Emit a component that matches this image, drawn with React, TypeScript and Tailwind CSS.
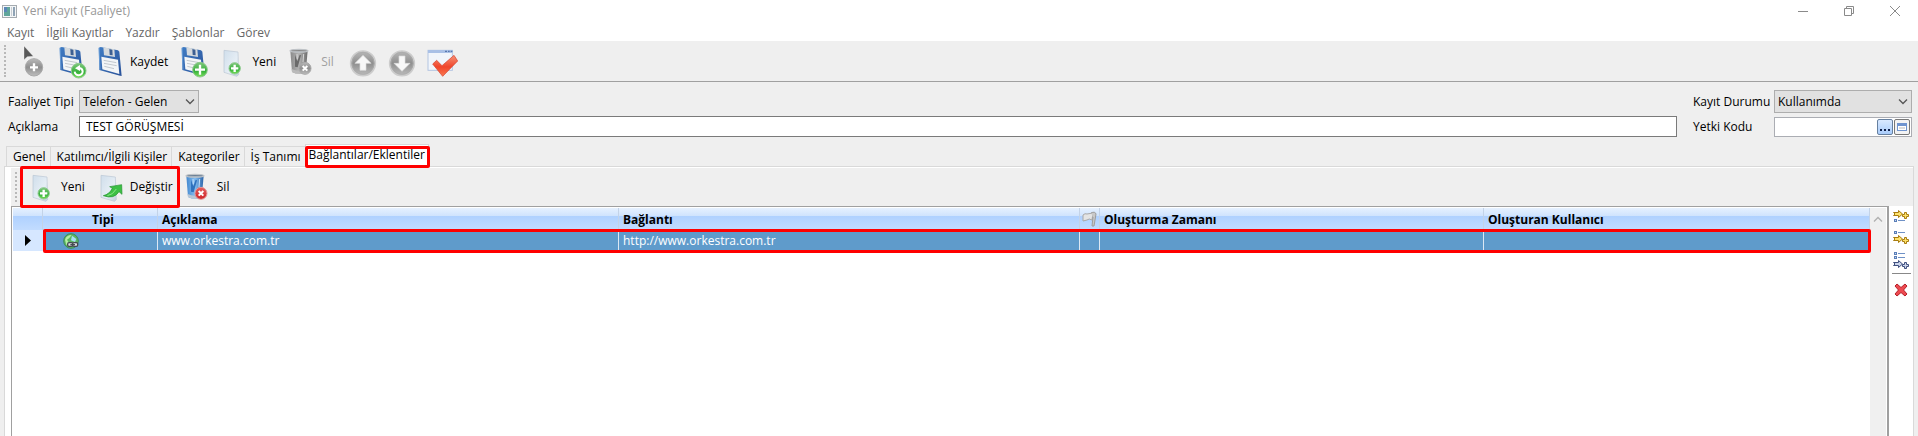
import React from 'react'

type IconProps = {
  className?: string
}

type ToolItem = {
  id: string
  icon: React.ReactNode
  text?: string
  label?: string
  disabled?: boolean
}

function Badge({ cx, cy, r, tone, children }: { cx: number; cy: number; r: number; tone: 'green' | 'gray' | 'red'; children?: React.ReactNode }) {
  const fill = { green: 'url(#badgeGreen)', gray: 'url(#badgeGray)', red: 'url(#badgeRed)' }[tone]
  const stroke = { green: '#8cc98b', gray: '#a9a9a9', red: '#e39a9a' }[tone]
  return (
    <g>
      <circle cx={cx} cy={cy} r={r} fill={fill} stroke={stroke} strokeWidth="3" />
      <g transform={`translate(${cx} ${cy})`}>{children}</g>
    </g>
  )
}

function Plus({ s }: { s: number }) {
  return <path d={`M${-s} 0H${s}M0 ${-s}V${s}`} stroke="#fff" strokeWidth="7" />
}

function Cross({ s }: { s: number }) {
  return <path d={`M${-s} ${-s}L${s} ${s}M${s} ${-s}L${-s} ${s}`} stroke="#fff" strokeWidth="6" />
}

function ToolSvg({ children }: { children: React.ReactNode }) {
  return (
    <svg viewBox="0 0 96 96" className="size-8 shrink-0 overflow-visible" fill="none" aria-hidden="true">
      {children}
    </svg>
  )
}

function SharedGradients() {
  return (
    <svg className="absolute size-0" aria-hidden="true">
      <defs>
        <linearGradient id="badgeGreen" x1="0" y1="0" x2="0" y2="1">
          <stop offset="0" stopColor="#7fc77c" />
          <stop offset="0.6" stopColor="#35b13a" />
          <stop offset="1" stopColor="#7be05c" />
        </linearGradient>
        <linearGradient id="badgeGray" x1="0" y1="0" x2="0" y2="1">
          <stop offset="0" stopColor="#b9b9b9" />
          <stop offset="0.5" stopColor="#8f8f8f" />
          <stop offset="1" stopColor="#bdbdbd" />
        </linearGradient>
        <linearGradient id="badgeRed" x1="0" y1="0" x2="0" y2="1">
          <stop offset="0" stopColor="#e2605f" />
          <stop offset="1" stopColor="#cf2226" />
        </linearGradient>
        <linearGradient id="floppyBody" x1="0" y1="0" x2="1" y2="1">
          <stop offset="0" stopColor="#3f7cc4" />
          <stop offset="1" stopColor="#2a5299" />
        </linearGradient>
        <linearGradient id="paper" x1="0" y1="0" x2="1" y2="1">
          <stop offset="0" stopColor="#d0deeb" />
          <stop offset="0.6" stopColor="#e6eef5" />
          <stop offset="1" stopColor="#c0cedb" />
        </linearGradient>
        <linearGradient id="binGray" x1="0" y1="0" x2="1" y2="0">
          <stop offset="0" stopColor="#8a8a8a" />
          <stop offset="0.5" stopColor="#b4b4b4" />
          <stop offset="1" stopColor="#6c6c6c" />
        </linearGradient>
        <linearGradient id="binBlue" x1="0" y1="0" x2="1" y2="0">
          <stop offset="0" stopColor="#4287cf" />
          <stop offset="0.5" stopColor="#84bdf0" />
          <stop offset="1" stopColor="#2a64aa" />
        </linearGradient>
        <linearGradient id="tick" x1="0" y1="0" x2="0" y2="1">
          <stop offset="0" stopColor="#f79276" />
          <stop offset="0.55" stopColor="#f0452b" />
          <stop offset="1" stopColor="#fa7a50" />
        </linearGradient>
      </defs>
    </svg>
  )
}

function Floppy() {
  return (
    <g>
      <path d="M8 5L14 3L66 13L70 17L77 90L72 89L10 72Z" fill="url(#floppyBody)" />
      <path d="M22 4L55 10L57 33L24 28Z" fill="#d5dade" />
      <path d="M40 9L49 11L50 28L41 27Z" fill="#3c5f92" />
      <path d="M16 32L66 41L70 84L19 70Z" fill="#f3f5f7" />
      <path d="M23 43L61 50M24 52L62 59M25 61L54 68" stroke="#c2c8ce" strokeWidth="3" />
      <path d="M9 6L12 71" stroke="#7fb0e4" strokeWidth="2" />
    </g>
  )
}

function CursorAddIcon() {
  return (
    <ToolSvg>
      <Badge cx={48} cy={64} r={26} tone="gray">
        <Plus s={12} />
      </Badge>
      <path d="M18 0V41L28 32L46 31Z" fill="#595959" stroke="#fff" strokeWidth="1" />
    </ToolSvg>
  )
}

function SaveRefreshIcon() {
  return (
    <ToolSvg>
      <Floppy />
      <Badge cx={65} cy={74} r={22} tone="green">
        <path d="M-12 3A12 11 0 0 0 12 2Q11 -7 2 -8" stroke="#fff" strokeWidth="6" />
        <path d="M4 -17V1L-11 -7Z" fill="#fff" />
      </Badge>
    </ToolSvg>
  )
}

function SaveIcon() {
  return (
    <ToolSvg>
      <Floppy />
    </ToolSvg>
  )
}

function SaveAddIcon() {
  return (
    <ToolSvg>
      <Floppy />
      <Badge cx={63} cy={71} r={22} tone="green">
        <Plus s={15} />
      </Badge>
    </ToolSvg>
  )
}

function NewIcon() {
  return (
    <ToolSvg>
      <path d="M18 13L60 18L62 86L56 91L18 79Z" fill="url(#paper)" stroke="#b9c6d3" strokeWidth="2" />
      <Badge cx={50} cy={67} r={17} tone="green">
        <Plus s={11} />
      </Badge>
    </ToolSvg>
  )
}

function ReplaceIcon() {
  return (
    <ToolSvg>
      <path d="M15 13L58 18L61 86L55 91L15 79Z" fill="url(#paper)" stroke="#b9c6d3" strokeWidth="2" />
      <path d="M22 74Q40 70 49 52L41 47L77 41L78 70L69 62Q54 86 22 74Z" fill="#3cc044" stroke="#249131" strokeWidth="2" />
      <path d="M34 74Q50 72 61 54" stroke="#8fe58b" strokeWidth="3" />
    </ToolSvg>
  )
}

function BinIcon({ gray = false }: { gray?: boolean }) {
  return (
    <ToolSvg>
      <path d="M10 14L15 78Q34 88 56 80L62 14Z" fill={gray ? 'url(#binGray)' : 'url(#binBlue)'} />
      <path d="M24 26L24 62L32 64L42 28L38 26L31 46Z" fill={gray ? '#6a6a6a' : '#2f72bd'} />
      <path d="M30 24L31 40M50 24L48 48" stroke={gray ? '#d8d8d8' : '#c4e0fa'} strokeWidth="3" />
      <path d="M14 69Q34 79 57 70L56 80Q34 88 15 78Z" fill={gray ? '#bababa' : '#b9c6d4'} />
      <ellipse cx="36" cy="14" rx="27" ry="4" fill={gray ? '#8a8a8a' : '#6b7f95'} stroke="#bfc3c7" strokeWidth="4" />
      <Badge cx={54} cy={67} r={18} tone={gray ? 'gray' : 'red'}>
        <Cross s={7} />
      </Badge>
    </ToolSvg>
  )
}

function ArrowIcon({ down = false }: { down?: boolean }) {
  return (
    <ToolSvg>
      <circle cx="54" cy="52" r="37" fill="url(#badgeGray)" stroke="#cccccc" strokeWidth="5" />
      <circle cx="54" cy="52" r="33" stroke="#aaaaaa" strokeWidth="2" />
      <path
        d={down ? 'M54 76L30 52H45V30H63V52H78Z' : 'M54 28L30 52H45V73H63V52H78Z'}
        fill="#f8f8f8"
        stroke="#dcdcdc"
        strokeWidth="2"
      />
    </ToolSvg>
  )
}

function CheckWindowIcon() {
  return (
    <ToolSvg>
      <rect x="15" y="13" width="73" height="60" fill="#f1f5fb" stroke="#b4c5e2" strokeWidth="3" />
      <rect x="15" y="12" width="74" height="9" fill="#a9c0e6" />
      <path d="M66 16H72M75 16H80M83 16H88" stroke="#5877ae" strokeWidth="4" />
      <path d="M29 54L41 43L57 59L93 28L104 45L59 91Z" fill="url(#tick)" stroke="#d33c28" strokeWidth="2" strokeLinejoin="round" />
    </ToolSvg>
  )
}

function FlagIcon() {
  return (
    <svg viewBox="0 0 15 16" className="mx-auto h-4 w-[15px]" fill="none" aria-hidden="true">
      <path d="M1 4Q3 2 5 3L11 2L10 9Q7 7 5 9L1 10Z" fill="#e4e4e4" stroke="#a8a8a8" />
      <path d="M9 2Q13 0 14 3L12 15H10L11 6" fill="#c9c9c9" stroke="#9c9c9c" />
    </svg>
  )
}

function GlobeLinkIcon() {
  return (
    <svg viewBox="0 0 48 48" className="block size-4" fill="none" aria-hidden="true">
      <circle cx="24" cy="24" r="22" fill="#5cb562" stroke="#3c8d5a" strokeWidth="3" />
      <path d="M6 20Q10 6 26 6Q20 16 12 20L18 30L10 36Z" fill="#b5efa4" />
      <path d="M27 8L40 18L36 27L24 22Z" fill="#a6dff4" />
      <g stroke="#464a50" strokeWidth="4">
        <rect x="14" y="29" width="15" height="11" rx="4" fill="#d9dde0" />
        <rect x="29" y="29" width="15" height="11" rx="4" fill="#d9dde0" />
        <path d="M22 35H36" />
      </g>
    </svg>
  )
}

function InsertRowIcon({ kind }: { kind: 'before' | 'after' | 'end' }) {
  const blue = kind === 'end'
  const arrowY = { before: 0, after: 4, end: 8 }[kind]
  const lines = { before: [10], after: [1], end: [1, 5] }[kind]
  return (
    <svg viewBox="0 0 16 18" className="block h-[18px] w-4" fill="none" aria-hidden="true">
      {lines.map((y) => (
        <g key={y}>
          <rect x="1.5" y={y - 0.5} width="2" height="2" fill="#c7d8f3" stroke="#5b7fb8" />
          <path d={`M5 ${y + 0.5}H12`} stroke="#6f91c6" />
        </g>
      ))}
      <g transform={`translate(0 ${arrowY})`} fill={blue ? '#cbd5ec' : '#ffe36b'} stroke={blue ? '#3f4f7e' : '#a87c10'}>
        <path d="M0.5 2.5H5.5V0.5L9.5 4L5.5 7.5V5.5H0.5L2 4Z" />
        <path d="M11.5 2.5H13.5V4.5H15.5V6.5H13.5V8.5H11.5V6.5H9.5V4.5H11.5Z" />
      </g>
    </svg>
  )
}

function DeleteRowIcon() {
  return (
    <svg viewBox="0 0 14 14" className="block size-3.5" aria-hidden="true">
      <path d="M1 3L3 1L7 4.5L11 1L13 3L9.5 7L13 11L11 13L7 9.5L3 13L1 11L4.5 7Z" fill="#ee4a50" stroke="#b5202a" />
    </svg>
  )
}

function Chevron({ className = '' }: IconProps) {
  return (
    <svg viewBox="0 0 10 6" className={`h-1.5 w-2.5 ${className}`} fill="none" aria-hidden="true">
      <path d="M1 0.5L5 4.5L9 0.5" stroke="currentColor" strokeWidth="1.3" />
    </svg>
  )
}

function Grip() {
  return <span className="my-1 w-0.5 self-stretch border-l-2 border-dotted border-[#b8b8b8]" />
}

function Marker({ className }: IconProps) {
  return <span className={`pointer-events-none absolute rounded-xs border-3 border-[#ff0000] ${className}`} />
}

function ToolButton({ item }: { item: ToolItem }) {
  return (
    <button type="button" disabled={item.disabled} aria-label={item.label} className="flex items-center disabled:text-[#a0a0a0]">
      {item.icon}
      {item.text ? <span className="pl-0.5 pr-1">{item.text}</span> : null}
    </button>
  )
}

function Dropdown({ id, value, className }: { id: string; value: string; className: string }) {
  return (
    <div className={`relative h-[23px] ${className}`}>
      <select id={id} className="block size-full appearance-none border border-[#adadad] bg-[#e1e1e1] pl-[3px] pr-5">
        <option>{value}</option>
      </select>
      <Chevron className="pointer-events-none absolute right-1 top-[9px] text-[#555]" />
    </div>
  )
}

const menu = ['Kayıt', 'İlgili Kayıtlar', 'Yazdır', 'Şablonlar', 'Görev']

const mainTools: ToolItem[] = [
  { id: 'pick', icon: <CursorAddIcon />, label: 'Seç' },
  { id: 'save-refresh', icon: <SaveRefreshIcon />, label: 'Kaydet ve yenile' },
  { id: 'save', icon: <SaveIcon />, text: 'Kaydet' },
  { id: 'save-new', icon: <SaveAddIcon />, label: 'Kaydet ve yeni' },
  { id: 'new', icon: <NewIcon />, text: 'Yeni' },
  { id: 'delete', icon: <BinIcon gray />, text: 'Sil', disabled: true },
  { id: 'up', icon: <ArrowIcon />, label: 'Önceki', disabled: true },
  { id: 'down', icon: <ArrowIcon down />, label: 'Sonraki', disabled: true },
  { id: 'done', icon: <CheckWindowIcon />, label: 'Tamamla' },
]

const linkTools: ToolItem[] = [
  { id: 'new', icon: <NewIcon />, text: 'Yeni' },
  { id: 'replace', icon: <ReplaceIcon />, text: 'Değiştir' },
]

const tabs = ['Genel', 'Katılımcı/İlgili Kişiler', 'Kategoriler', 'İş Tanımı']

function TitleBar() {
  return (
    <header className="flex h-[22px] items-center bg-white pl-0.5 text-[#999]">
      <svg viewBox="0 0 15 13" className="h-[13px] w-[15px]" aria-hidden="true">
        <rect x="0.5" y="0.5" width="14" height="12" fill="#f4f6f7" stroke="#a5abb0" />
        <rect x="2" y="2" width="6" height="9" fill="#5fa59a" />
        <rect x="2" y="2" width="3" height="5" fill="#5b86b8" />
        <rect x="9" y="2" width="1" height="9" fill="#c8cdd2" />
        <rect x="11" y="2" width="2" height="9" fill="#8fa3b5" />
      </svg>
      <h1 className="pl-1.5">Yeni Kayıt (Faaliyet)</h1>
      <div className="ml-auto flex text-[#8a8a8a]">
        <button type="button" aria-label="Simge durumuna küçült" className="flex w-[46px] justify-center">
          <svg viewBox="0 0 10 10" className="size-2.5" fill="none"><path d="M0 5.5H10" stroke="currentColor" /></svg>
        </button>
        <button type="button" aria-label="Önceki boyut" className="flex w-[46px] justify-center">
          <svg viewBox="0 0 10 10" className="size-2.5" fill="none">
            <path d="M0.5 2.5H7.5V9.5H0.5ZM2.5 2V0.5H9.5V7.5H8" stroke="currentColor" />
          </svg>
        </button>
        <button type="button" aria-label="Kapat" className="flex w-[46px] justify-center">
          <svg viewBox="0 0 10 10" className="size-2.5" fill="none"><path d="M0 0L10 10M10 0L0 10" stroke="currentColor" /></svg>
        </button>
      </div>
    </header>
  )
}

function RecordForm() {
  return (
    <form className="flex flex-col gap-[3px] pl-2 pr-1.5 pt-2">
      <div className="flex items-center">
        <label htmlFor="type" className="w-[71px]">Faaliyet Tipi</label>
        <Dropdown id="type" value="Telefon - Gelen" className="w-[120px]" />
        <label htmlFor="state" className="ml-auto w-[81px]">Kayıt Durumu</label>
        <Dropdown id="state" value="Kullanımda" className="w-[138px]" />
      </div>
      <div className="flex items-center">
        <label htmlFor="desc" className="w-[71px]">Açıklama</label>
        <input id="desc" defaultValue="TEST GÖRÜŞMESİ" className="h-[21px] min-w-0 flex-1 border border-[#7a7a7a] bg-white px-1.5" />
        <label htmlFor="auth" className="ml-4 w-[81px]">Yetki Kodu</label>
        <div className="flex h-5 w-[138px] items-center gap-px border border-[#abadb3] bg-white pr-px">
          <input id="auth" className="h-full min-w-0 flex-1 px-1" />
          <button type="button" aria-label="Yetki kodu seç" className="flex h-4 w-4 items-end justify-center gap-0.5 rounded-xs border border-[#66809f] bg-linear-to-b from-[#d9e9ff] to-[#a9ccfb] pb-[3px]">
            <span className="size-0.5 bg-[#10204a]" />
            <span className="size-0.5 bg-[#10204a]" />
            <span className="size-0.5 bg-[#10204a]" />
          </button>
          <button type="button" aria-label="Yetki kodu penceresi" className="flex h-4 w-4 items-center justify-center rounded-xs border border-[#777] bg-[#f3f3f3]">
            <svg viewBox="0 0 10 8" className="h-2 w-2.5" aria-hidden="true">
              <rect x="0.5" y="0.5" width="9" height="7" fill="#fff" stroke="#6f94cf" />
              <rect width="10" height="3" fill="#6f94cf" />
              <path d="M2 5H8" stroke="#b9b9b9" />
            </svg>
          </button>
        </div>
      </div>
    </form>
  )
}

function TabStrip() {
  return (
    <nav role="tablist" className="flex items-end pl-1.5">
      {tabs.map((t) => (
        <button key={t} type="button" role="tab" aria-selected="false" className="h-5 border-l border-t border-[#d9d9d9] pl-1.5 pr-1">
          {t}
        </button>
      ))}
      <button type="button" role="tab" aria-selected="true" className="relative h-[22px] border-x border-t border-[#d9d9d9] bg-white px-[3px] pb-0.5">
        Bağlantılar/Eklentiler
        <Marker className="-bottom-0.5 -right-0.5 -left-px top-px" />
      </button>
    </nav>
  )
}

function LinkGrid() {
  const head = 'border-r border-[#c3d3e8] px-1 pt-0.5 text-left font-bold'
  const cell = 'border-r border-[#dce8f4] px-1'
  return (
    <div className="flex min-h-0 flex-1 border-l border-t border-[#a0a0a0] bg-white pl-px pt-px">
      <div className="relative min-w-0 flex-1">
        <table className="w-full table-fixed border-separate border-spacing-0">
          <colgroup>
            <col className="w-[30px]" />
            <col className="w-[115px]" />
            <col className="w-[461px]" />
            <col className="w-[461px]" />
            <col className="w-5" />
            <col className="w-[384px]" />
            <col />
          </colgroup>
          <thead>
            <tr className="h-[22px] bg-[linear-gradient(#e6f1ff_0,#cfe3fd_8px,#afd1ff_8px,#c2dcff_100%)]">
              <th className={head} aria-label="Satır" />
              <th className="border-r border-[#c3d3e8] pl-1.5 pt-0.5 text-center font-bold">Tipi</th>
              <th className={head}>Açıklama</th>
              <th className={head}>Bağlantı</th>
              <th className="border-r border-[#c3d3e8]" aria-label="Bayrak"><FlagIcon /></th>
              <th className={head}>Oluşturma Zamanı</th>
              <th className={head}>Oluşturan Kullanıcı</th>
            </tr>
          </thead>
          <tbody>
            <tr className="h-[21px] bg-[#5f9bcb] text-white">
              <td className="bg-[#d6e7ff]">
                <svg viewBox="0 0 6 11" className="mx-auto h-[11px] w-1.5" aria-hidden="true"><path d="M0 0L6 5.5L0 11Z" /></svg>
              </td>
              <td className="border-r border-[#dce8f4] pl-5"><GlobeLinkIcon /></td>
              <td className={cell}>www.orkestra.com.tr</td>
              <td className={cell}>http://www.orkestra.com.tr</td>
              <td className={cell} />
              <td className={cell} />
              <td />
            </tr>
          </tbody>
        </table>
        <Marker className="-right-px left-[30px] top-[21px] h-6" />
      </div>
      <div className="flex w-[17px] justify-center border-r border-white bg-[#f0f0f0] pt-2">
        <Chevron className="rotate-180 text-[#b0b0b0]" />
      </div>
    </div>
  )
}

function RowTools() {
  return (
    <aside className="flex w-[26px] flex-col items-center gap-[3px] border-l-2 border-[#a0a0a0] bg-white pt-1">
      <button type="button" aria-label="Öncesine ekle"><InsertRowIcon kind="before" /></button>
      <button type="button" aria-label="Sonrasına ekle"><InsertRowIcon kind="after" /></button>
      <button type="button" aria-label="Sona ekle"><InsertRowIcon kind="end" /></button>
      <hr className="w-[19px] border-[#888]" />
      <button type="button" aria-label="Satırı sil" className="pt-1.5"><DeleteRowIcon /></button>
    </aside>
  )
}

export default function App() {
  return (
    <div className="flex h-screen flex-col overflow-hidden bg-[#efefef] font-['Open_Sans',sans-serif] text-[12px] leading-4 text-black">
      <SharedGradients />
      <TitleBar />
      <nav className="flex h-[19px] items-center gap-3 bg-white pl-[7px] pt-0.5 text-[#666]">
        {menu.map((m) => (
          <button key={m} type="button">{m}</button>
        ))}
      </nav>

      <div className="flex h-[41px] items-center gap-[7px] border-b border-[#a0a0a0] pl-1">
        <Grip />
        <div className="flex items-center gap-[7px] pl-[5px] pt-0.5">
          {mainTools.map((item) => (
            <ToolButton key={item.id} item={item} />
          ))}
        </div>
      </div>

      <RecordForm />

      <main className="flex min-h-0 flex-1 flex-col pt-[7px]">
        <TabStrip />
        <section className="ml-1 mr-1 flex min-h-0 flex-1 flex-col border-x border-t border-[#d9d9d9] bg-white pl-1.5 pt-px">
          <div className="flex h-[38px] items-center bg-[#efefef] pl-1">
            <Grip />
            <div className="relative ml-2.5 flex items-center gap-[7px]">
              {linkTools.map((item) => (
                <ToolButton key={item.id} item={item} />
              ))}
              <Marker className="-bottom-[5px] -left-[7px] -right-[3px] -top-[5px]" />
            </div>
            <div className="pl-1.5">
              <ToolButton item={{ id: 'delete', icon: <BinIcon />, text: 'Sil' }} />
            </div>
          </div>
          <div className="flex min-h-0 flex-1">
            <LinkGrid />
            <RowTools />
          </div>
        </section>
      </main>
    </div>
  )
}
